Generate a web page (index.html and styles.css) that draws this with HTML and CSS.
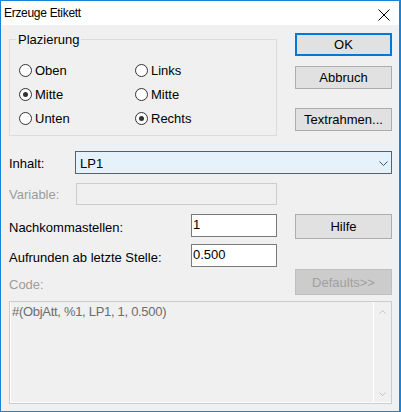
FILE: index.html
```html
<!DOCTYPE html>
<html lang="de">
  <head>
    <meta charset="UTF-8" />
    <meta name="viewport" content="width=device-width, initial-scale=1.0" />
    <title>Erzeuge Etikett</title>
    <link rel="stylesheet" href="styles.css">
  </head>
  <body>
    <div class="dialog">
      <div class="titlebar">
        <span class="title">Erzeuge Etikett</span>
        <svg class="close" width="12" height="12" viewBox="0 0 12 12">
          <path d="M0.5 0.5 L11.5 11.5 M11.5 0.5 L0.5 11.5" stroke="#000" stroke-width="1" fill="none" />
        </svg>
      </div>
      <div class="client">
        <div class="top">
          <fieldset class="group">
            <legend>Plazierung</legend>
            <div class="radios">
              <label class="radio"><span class="dot"></span>Oben</label>
              <label class="radio"><span class="dot"></span>Links</label>
              <label class="radio"><span class="dot checked"></span>Mitte</label>
              <label class="radio"><span class="dot"></span>Mitte</label>
              <label class="radio"><span class="dot"></span>Unten</label>
              <label class="radio"><span class="dot checked"></span>Rechts</label>
            </div>
          </fieldset>
          <div class="buttons">
            <div class="btn default">OK</div>
            <div class="btn btn-abbruch">Abbruch</div>
            <div class="btn btn-rahmen">Textrahmen...</div>
          </div>
        </div>

        <div class="row row-inhalt">
          <span class="label label-inhalt">Inhalt:</span>
          <div class="combo">
            <span class="combo-text">LP1</span>
            <svg width="9" height="5" viewBox="0 0 9 5">
              <polyline points="0.5,0.5 4.5,4.5 8.5,0.5" stroke="#505050" fill="none" />
            </svg>
          </div>
        </div>

        <div class="row row-variable">
          <span class="label label-variable disabled">Variable:</span>
          <div class="edit edit-disabled"></div>
        </div>

        <div class="row row-nachkomma">
          <span class="label label-wide">Nachkommastellen:</span>
          <div class="edit edit-num">1</div>
          <div class="btn btn-lower">Hilfe</div>
        </div>

        <div class="row row-aufrunden">
          <span class="label label-wide label-low">Aufrunden ab letzte Stelle:</span>
          <div class="edit edit-num">0.500</div>
        </div>

        <div class="row row-code">
          <span class="label label-code disabled">Code:</span>
          <div class="btn btn-lower btn-disabled">Defaults&gt;&gt;</div>
        </div>

        <div class="code-box">
          <div class="code-text">#(ObjAtt, %1, LP1, 1, 0.500)</div>
          <div class="scrollbar">
            <svg width="7" height="4" viewBox="0 0 7 4">
              <polyline points="0.5,3.5 3.5,0.5 6.5,3.5" stroke="#c2c2c2" fill="none" />
            </svg>
            <svg width="7" height="4" viewBox="0 0 7 4">
              <polyline points="0.5,0.5 3.5,3.5 6.5,0.5" stroke="#c2c2c2" fill="none" />
            </svg>
          </div>
        </div>
      </div>
    </div>
  </body>
</html>
```

FILE: styles.css
```css
html,
body {
  margin: 0;
  padding: 0;
  background: #fff;
}
.dialog {
  box-sizing: border-box;
  width: 401px;
  height: 412px;
  border: 1px solid #1883d7;
  border-right-width: 2px;
  background: #f0f0f0;
  font-family: "Liberation Sans", Arial, sans-serif;
  font-size: 13px;
  line-height: 15px;
  color: #000;
}
/* titelleiste */
.titlebar {
  height: 24px;
  display: flex;
  align-items: center;
  padding-left: 3px;
  background: #fff;
}
.title {
  flex: 1;
  font-size: 12px;
  letter-spacing: -0.3px;
}
.close {
  margin: 3px 9px 0 0;
}
.client {
  padding: 0 7px 0 8px;
}
/* oben: gruppe + knoepfe */
.top {
  display: flex;
  justify-content: space-between;
}
.group {
  box-sizing: border-box;
  width: 268px;
  margin: 7px 0 0;
  padding: 0 0 5px 9px;
  border: 1px solid #dcdcdc;
  min-width: 0;
}
.group legend {
  margin-left: -3px;
  padding: 0 2px;
  line-height: 15px;
}
.radios {
  display: grid;
  grid-template-columns: 116px 1fr;
  grid-auto-rows: 24px;
  padding-top: 11px;
}
.radio {
  display: flex;
  align-items: center;
  gap: 3px;
}
.dot {
  box-sizing: border-box;
  width: 13px;
  height: 13px;
  border: 1px solid #333;
  border-radius: 50%;
  background: #fff;
  display: inline-flex;
  justify-content: center;
  align-items: center;
}
.dot.checked::after {
  content: "";
  width: 5px;
  height: 5px;
  border-radius: 50%;
  background: #333;
}
.buttons {
  width: 97px;
  margin-top: 8px;
  display: flex;
  flex-direction: column;
}
.btn {
  box-sizing: border-box;
  height: 23px;
  display: flex;
  justify-content: center;
  align-items: center;
  background: #e1e1e1;
  border: 1px solid #adadad;
}
.btn.default {
  border: 2px solid #0078d7;
}
.btn-abbruch {
  margin-top: 10px;
}
.btn-rahmen {
  margin-top: 19px;
}
.btn-lower {
  width: 97px;
  height: 25px;
  margin-left: auto;
  align-self: flex-start;
}
.btn-disabled {
  background: #cccccc;
  border-color: #bfbfbf;
  color: #a0a0a0;
}
/* eingabezeilen */
.row {
  display: flex;
  align-items: center;
}
.label {
  flex: none;
  padding-top: 1px;
}
.disabled {
  color: #9c9c9c;
}
.label-inhalt {
  width: 66px;
}
.label-variable {
  width: 67px;
}
.label-wide {
  width: 182px;
}
.label-low {
  padding-top: 4px;
}
.label-code {
  padding-top: 5px;
}
.row-inhalt {
  margin-top: 15px;
  height: 23px;
}
.combo {
  box-sizing: border-box;
  flex: 1;
  height: 23px;
  display: flex;
  align-items: center;
  padding: 1px 3px 0 4px;
  background: #e5f1fb;
  border: 1px solid #0078d7;
}
.combo-text {
  flex: 1;
}
.row-variable {
  margin-top: 9px;
  height: 22px;
}
.edit {
  box-sizing: border-box;
  height: 23px;
  background: #fff;
  border: 1px solid #7a7a7a;
  padding: 0 1px;
  line-height: 19px;
}
.edit-disabled {
  width: 201px;
  height: 22px;
  background: #f0f0f0;
  border-color: #cccccc;
}
.edit-num {
  width: 86px;
}
.row-nachkomma {
  margin-top: 9px;
  height: 26px;
  align-items: flex-start;
}
.row-nachkomma .label {
  padding-top: 6px;
}
.row-aufrunden {
  margin-top: 4px;
  height: 23px;
}
.row-code {
  margin-top: 2px;
  height: 26px;
}
.row-code .btn-lower {
  height: 26px;
}
/* code-feld mit scrollleiste */
.code-box {
  box-sizing: border-box;
  height: 103px;
  margin-top: 6px;
  display: flex;
  border: 1px solid #cccccc;
  box-shadow: inset 1px -1px 0 #fff;
}
.code-text {
  flex: 1;
  padding: 2px 2px;
  color: #6d6d6d;
  letter-spacing: -0.3px;
}
.scrollbar {
  width: 17px;
  border-left: 1px solid #fff;
  display: flex;
  flex-direction: column;
  justify-content: space-between;
  align-items: center;
  padding: 8px 0 7px;
}
```
